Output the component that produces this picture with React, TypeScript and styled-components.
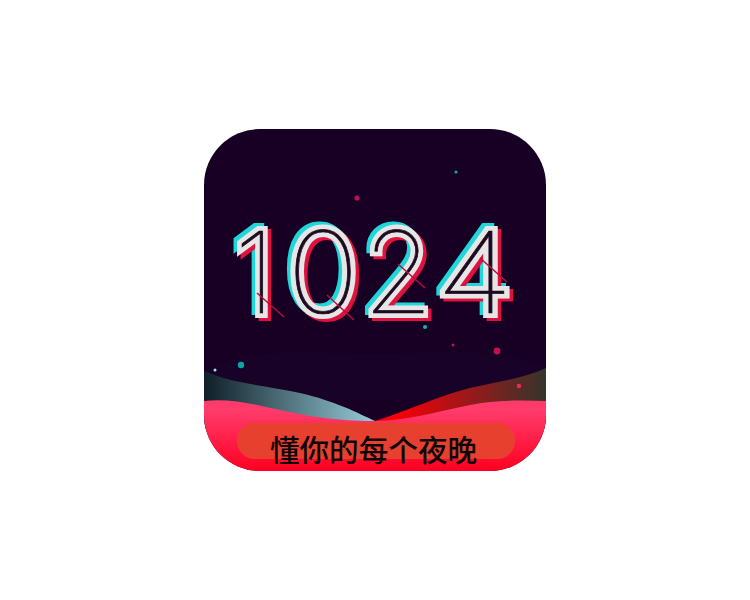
import React from "react";
import styled, { createGlobalStyle } from "styled-components";

const Global = createGlobalStyle`
  html, body { margin: 0; padding: 0; background: #fff; }
`;

const Page = styled.main`
  width: 750px;
  height: 600px;
  display: flex;
  align-items: center;
  justify-content: center;
`;

const Icon = styled.div`
  position: relative;
  width: 342px;
  height: 342px;
  border-radius: 56px;
  overflow: hidden;
  background: #170024;
`;

const Art = styled.svg`
  display: block;
  width: 342px;
  height: 342px;
`;

const Caption = styled.div`
  position: absolute;
  left: 33px;
  right: 31px;
  top: 294px;
  height: 36px;
  padding-right: 5px;
  box-sizing: border-box;
  border-radius: 18px;
  background: #e8402f;
  display: flex;
  justify-content: center;
  color: #0f0305;
  font-family: "Noto Sans CJK SC", sans-serif;
  font-size: 29.6px;
  font-weight: 500;
  line-height: 51px;
  white-space: nowrap;
`;

const stars = [
  { x: 241, y: 365, r: 3.2, c: "#0aa5a5" },
  { x: 215, y: 370, r: 1.5, c: "#9fe0ea" },
  { x: 497, y: 351, r: 3.4, c: "#c2104f" },
  { x: 453, y: 345, r: 1.5, c: "#c2104f" },
  { x: 519, y: 386, r: 2.2, c: "#f02a55" },
  { x: 456, y: 172, r: 1.6, c: "#1aa5a5" },
  { x: 357, y: 198, r: 2.6, c: "#c0104a" },
  { x: 425, y: 327, r: 2, c: "#0fb5b5" },
];

const digits = [
  { ch: "1", x: 234, sx: 1 },
  { ch: "0", x: 287, sx: 1.08 },
  { ch: "2", x: 363, sx: 1 },
  { ch: "4", x: 436, sx: 1.15 },
];

const Layer = ({ dx, dy, color, width }: { dx: number; dy: number; color: string; width: number }) => (
  <g transform={`translate(${dx} ${dy})`} fill={color} stroke={color} strokeWidth={width}>
    {digits.map((d) => (
      <text
        key={d.ch}
        transform={`translate(${d.x} 313) scale(${d.sx} 1)`}
        fontFamily="Inter, sans-serif"
        fontWeight={100}
        fontSize={113}
      >
        {d.ch}
      </text>
    ))}
  </g>
);

export default function App() {
  return (
    <Page>
      <Global />
      <Icon>
        <Art viewBox="204 129 342 342" xmlns="http://www.w3.org/2000/svg">
          <defs>
            <linearGradient id="leftWing" x1="204" y1="0" x2="375" y2="0" gradientUnits="userSpaceOnUse">
              <stop offset="0" stopColor="#0e1f28" />
              <stop offset="1" stopColor="#97ccd8" />
            </linearGradient>
            <linearGradient id="rightWing" x1="375" y1="0" x2="546" y2="0" gradientUnits="userSpaceOnUse">
              <stop offset="0.15" stopColor="#f50008" />
              <stop offset="1" stopColor="#33352c" />
            </linearGradient>
            <linearGradient id="base" x1="0" y1="400" x2="0" y2="471" gradientUnits="userSpaceOnUse">
              <stop offset="0.15" stopColor="#ff3b6b" />
              <stop offset="1" stopColor="#ff0020" />
            </linearGradient>
          </defs>
          <path d="M204 371 C250 345 320 354 375 354 C430 354 500 345 546 368 L546 400 L204 400 Z" fill="#190227" />
          <path d="M204 371 C235 384 262 385 300 393 C335 401 358 413 375 421 L375 430 L204 430 Z" fill="url(#leftWing)" />
          <path d="M375 421 C410 410 438 396 470 388 C500 381 525 378 546 368 L546 430 L375 430 Z" fill="url(#rightWing)" />
          <path d="M204 401 C240 397 272 410 310 416 C335 420 355 421 375 421 C405 421 435 412 470 405 C495 400 520 400 546 401 L546 471 L204 471 Z" fill="url(#base)" />
          {stars.map((s) => (
            <circle key={`${s.x}-${s.y}`} cx={s.x} cy={s.y} r={s.r} fill={s.c} />
          ))}
          <Layer dx={-3.5} dy={-3} color="#1fd6d8" width={10} />
          <Layer dx={3.5} dy={3} color="#e0103f" width={10} />
          <Layer dx={0} dy={0} color="#e6e6e6" width={10} />
          <Layer dx={0} dy={0} color="#1d0a1f" width={0.7} />
          <g stroke="#b5103f" strokeWidth="1.5">
            <line x1="257" y1="293" x2="284" y2="317" />
            <line x1="327" y1="295" x2="354" y2="320" />
            <line x1="398" y1="264" x2="425" y2="288" />
            <line x1="480" y1="258" x2="507" y2="282" />
          </g>
        </Art>
        <Caption>懂你的每个夜晚</Caption>
      </Icon>
    </Page>
  );
}
